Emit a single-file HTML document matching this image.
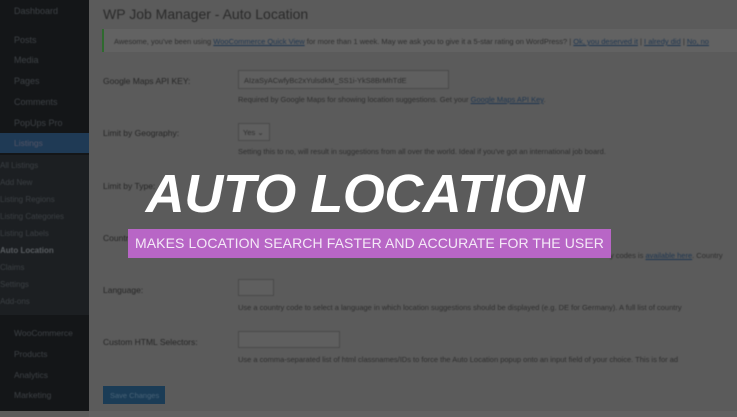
<!DOCTYPE html>
<html><head><meta charset="utf-8"><style>
*{margin:0;padding:0;box-sizing:border-box}
body{width:737px;height:417px;overflow:hidden;background:#5b5b5b;font-family:"Liberation Sans",sans-serif;position:relative}
.sb{position:absolute;left:0;top:0;width:89px;height:411px;background:#141618}
.sb div{position:absolute;left:14px;font-size:9px;color:#3e4246;filter:blur(0.6px)}
.sub{position:absolute;left:0;top:155px;width:89px;height:160px;background:#1c1f22}
.lst{position:absolute;left:0;top:133px;width:89px;height:20px;background:#1f3a55}
.c{position:absolute;color:#262626;font-size:8.5px;filter:blur(0.6px);white-space:nowrap}
.d{color:#2e2e2e;font-size:7.5px}
.box{position:absolute;border:1px solid #4a4a4a;background:#5f5f5f;filter:blur(0.5px)}
.title{position:absolute;left:140px;top:163px;width:450px;text-align:center;color:#fff;font-weight:bold;font-style:italic;font-size:54px;letter-spacing:-0.5px;white-space:nowrap}
.tag{position:absolute;left:128px;top:229px;width:483px;height:29px;background:#b866c6;color:#f4e9f7;font-size:14px;line-height:29px;text-align:center;white-space:nowrap;letter-spacing:0.1px}
</style></head><body>
<div class="sb">
<div style="top:6px">Dashboard</div>
<div style="top:35px">Posts</div>
<div style="top:55px">Media</div>
<div style="top:76px">Pages</div>
<div style="top:97px">Comments</div>
<div style="top:118px">PopUps Pro</div>
</div>
<div class="lst"></div>
<div class="c" style="left:14px;top:138px;color:#556">Listings</div>
<div class="sub"></div>
<div class="c" style="left:0;top:161px;color:#3c4044;font-size:8px">All Listings</div>
<div class="c" style="left:0;top:178px;color:#3c4044;font-size:8px">Add New</div>
<div class="c" style="left:0;top:195px;color:#3c4044;font-size:8px">Listing Regions</div>
<div class="c" style="left:0;top:212px;color:#3c4044;font-size:8px">Listing Categories</div>
<div class="c" style="left:0;top:229px;color:#3c4044;font-size:8px">Listing Labels</div>
<div class="c" style="left:0;top:246px;color:#5a5e62;font-size:8px;font-weight:bold">Auto Location</div>
<div class="c" style="left:0;top:263px;color:#3c4044;font-size:8px">Claims</div>
<div class="c" style="left:0;top:280px;color:#3c4044;font-size:8px">Settings</div>
<div class="c" style="left:0;top:297px;color:#3c4044;font-size:8px">Add-ons</div>
<div class="c" style="left:14px;top:328px;color:#3e4246">WooCommerce</div>
<div class="c" style="left:14px;top:349px;color:#3e4246">Products</div>
<div class="c" style="left:14px;top:370px;color:#3e4246">Analytics</div>
<div class="c" style="left:14px;top:390px;color:#3e4246">Marketing</div>

<div class="c" style="left:103px;top:6px;font-size:14px;color:#2a2a2a">WP Job Manager - Auto Location</div>
<div style="position:absolute;left:102px;top:29px;width:640px;height:23px;background:#626262;border-left:2px solid #2f6a2f"></div>
<div class="c d" style="left:114px;top:37px">Awesome, you've been using <u style="color:#1d3550">WooCommerce Quick View</u> for more than 1 week. May we ask you to give it a 5-star rating on WordPress? | <u style="color:#1d3550">Ok, you deserved it</u> | <u style="color:#1d3550">I alredy did</u> | <u style="color:#1d3550">No, no</u></div>
<div class="c" style="left:103px;top:76px">Google Maps API KEY:</div>
<div class="box" style="left:238px;top:70px;width:211px;height:19px"></div>
<div class="c d" style="left:244px;top:76px">AIzaSyACwfyBc2xYulsdkM_SS1i-YkS8BrMhTdE</div>
<div class="c d" style="left:238px;top:95px">Required by Google Maps for showing location suggestions. Get your <u style="color:#1d3550">Google Maps API Key</u>.</div>
<div class="c" style="left:103px;top:128px">Limit by Geography:</div>
<div class="box" style="left:238px;top:123px;width:32px;height:18px"></div>
<div class="c d" style="left:243px;top:128px">Yes ⌄</div>
<div class="c d" style="left:238px;top:147px">Setting this to no, will result in suggestions from all over the world. Ideal if you've got an international job board.</div>
<div class="c" style="left:103px;top:181px">Limit by Type:</div>
<div class="c" style="left:103px;top:233px">Country:</div>
<div class="c d" style="left:610px;top:251px">y codes is <u style="color:#1d3550">available here</u>. Country</div>
<div class="c" style="left:103px;top:285px">Language:</div>
<div class="box" style="left:238px;top:279px;width:36px;height:17px"></div>
<div class="c d" style="left:238px;top:303px">Use a country code to select a language in which location suggestions should be displayed (e.g. DE for Germany). A full list of country</div>
<div class="c" style="left:103px;top:337px">Custom HTML Selectors:</div>
<div class="box" style="left:238px;top:331px;width:102px;height:17px"></div>
<div class="c d" style="left:238px;top:355px">Use a comma-separated list of html classnames/IDs to force the Auto Location popup onto an input field of your choice. This is for ad</div>
<div style="position:absolute;left:103px;top:386px;width:62px;height:18px;background:#1b3c56"></div>
<div class="c d" style="left:110px;top:391px;color:#4a6478">Save Changes</div>
<div style="position:absolute;left:89px;top:411px;width:648px;height:6px;background:#616161"></div>

<div class="title">AUTO LOCATION</div>
<div class="tag">MAKES LOCATION SEARCH FASTER AND ACCURATE FOR THE USER</div>
</body></html>
